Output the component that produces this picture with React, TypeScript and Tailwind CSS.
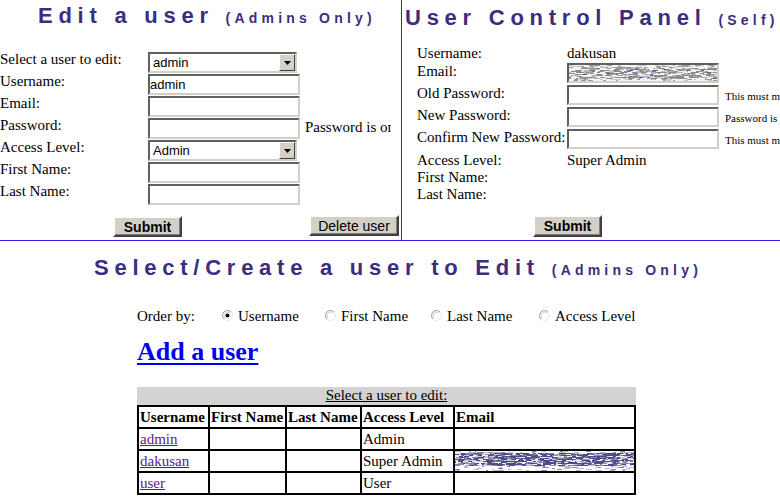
import React from 'react';

const SANS = "font-['Liberation_Sans',Arial,sans-serif]";
const HEAD = "font-['Liberation_Sans',Arial,sans-serif] font-bold text-[#3b2e80] whitespace-nowrap h-[25px]";
const INSET =
  'border-2 border-t-[#5f5f5f] border-l-[#5f5f5f] border-r-[#d4d0c8] border-b-[#d4d0c8] bg-white';
const BTN =
  "bg-[#d4d0c8] border-2 border-t-white border-l-white border-r-[#404040] border-b-[#404040] shadow-[inset_-1px_-1px_0_#808080] font-['Liberation_Sans',Arial,sans-serif] text-[14px] leading-none flex items-center justify-center text-black";

function rng(seed: number) {
  let s = seed;
  return () => {
    s = (s * 1103515245 + 12345) & 0x7fffffff;
    return s / 0x7fffffff;
  };
}

type NoiseProps = {
  w: number;
  h: number;
  seed: number;
  bg: string;
  band: [number, number];
  inner: [string, number][];
  outer: [string, number][];
};

function pick(r: () => number, list: [string, number][]) {
  const v = r();
  let acc = 0;
  for (const [c, p] of list) {
    acc += p;
    if (v < acc) return c;
  }
  return list[list.length - 1][0];
}

function Noise({ w, h, seed, bg, band, inner, outer }: NoiseProps) {
  const r = rng(seed);
  const rects: React.ReactNode[] = [];
  let k = 0;
  for (let y = 0; y < h; y++) {
    let x = 0;
    const inBand = y >= band[0] && y <= band[1];
    while (x < w) {
      const len = 1 + Math.floor(r() * 6);
      const c = pick(r, inBand ? inner : outer);
      rects.push(<rect key={k++} x={x} y={y} width={len} height={1} fill={c} />);
      x += len;
    }
  }
  return (
    <svg width={w} height={h} className="block">
      <rect width={w} height={h} fill={bg} />
      {rects}
    </svg>
  );
}

function Arrow() {
  return (
    <svg width="7" height="4" viewBox="0 0 7 4" className="block">
      <path d="M0 0H7L3.5 4Z" fill="#000" />
    </svg>
  );
}

function FakeSelect({ value }: { value: string }) {
  return (
    <div className={`mt-px h-[21px] w-[149px] flex items-center ${INSET}`}>
      <span className={`flex-1 pl-[3px] ${SANS} text-[13px] leading-[17px]`}>{value}</span>
      <span className="w-[16px] h-[17px] bg-[#d4d0c8] border border-t-white border-l-white border-r-[#404040] border-b-[#404040] flex items-center justify-center">
        <Arrow />
      </span>
    </div>
  );
}

function FakeInput({ value = '' }: { value?: string }) {
  return (
    <div className={`mt-px h-[21px] w-[152px] ${INSET} ${SANS} text-[13px] leading-[17px] px-0`}>
      {value}
    </div>
  );
}

function LRow({ label, children }: { label: string; children: React.ReactNode }) {
  return (
    <div className="flex h-[22px]">
      <div className="w-[148px] shrink-0 whitespace-nowrap">{label}</div>
      {children}
    </div>
  );
}

function LeftPanel() {
  return (
    <div className="w-[401px] shrink-0 overflow-hidden">
      <h1 className={`${HEAD} mt-[3px] pl-[38px] leading-[25px] text-[22px] tracking-[5.75px]`}>
        Edit a user <span className="text-[14px] leading-[14px] tracking-[4.2px]">(Admins Only)</span>
      </h1>
      <div className="mt-[23px]">
        <LRow label="Select a user to edit:">
          <FakeSelect value="admin" />
        </LRow>
        <LRow label="Username:">
          <FakeInput value="admin" />
        </LRow>
        <LRow label="Email:">
          <FakeInput />
        </LRow>
        <LRow label="Password:">
          <FakeInput />
          <span className="ml-[5px] mt-[2px] w-[86px] overflow-hidden whitespace-nowrap block">
            Password is only changed if entered
          </span>
        </LRow>
        <LRow label="Access Level:">
          <FakeSelect value="Admin" />
        </LRow>
        <LRow label="First Name:">
          <FakeInput />
        </LRow>
        <LRow label="Last Name:">
          <FakeInput />
        </LRow>
      </div>
      <div className="flex items-start mt-[10px]">
        <button className={`${BTN} ml-[113px] mt-px h-[21px] w-[69px] font-bold`}>Submit</button>
        <button className={`${BTN} ml-[127px] h-[21px] w-[90px]`}>Delete user</button>
      </div>
    </div>
  );
}

function RInput({ children }: { children?: React.ReactNode }) {
  return (
    <div className={`mt-px h-[20px] w-[152px] shrink-0 overflow-hidden ${INSET}`}>{children}</div>
  );
}

function Note({ text }: { text: string }) {
  return (
    <span className="ml-[6px] mt-[6px] text-[11px] leading-[13px] whitespace-nowrap">{text}</span>
  );
}

function RightPanel() {
  return (
    <div className="w-[500px] shrink-0">
      <h1 className={`${HEAD} mt-[5px] pl-[3px] leading-[25px] text-[22px] tracking-[5.75px]`}>
        User Control Panel <span className="text-[14px] leading-[14px] tracking-[4.2px]">(Self)</span>
      </h1>
      <div className="mt-[15px] pl-[15px]">
        <div className="flex h-[17px]">
          <div className="w-[150px] shrink-0">Username:</div>
          <div>dakusan</div>
        </div>
        <div className="flex h-[22px] items-start">
          <div className="w-[150px] shrink-0 pt-px">Email:</div>
          <RInput>
            <Noise
              w={148}
              h={16}
              seed={7}
              bg="#e4e4e4"
              band={[3, 13]}
              inner={[
                ['#8a8a8a', 0.38],
                ['#b5b5b5', 0.2],
                ['#5a5aa6', 0.04],
                ['#f2f2f2', 0.38],
              ]}
              outer={[
                ['#9a9a9a', 0.25],
                ['#c8c8c8', 0.2],
                ['#f4f4f4', 0.55],
              ]}
            />
          </RInput>
        </div>
        <div className="flex h-[22px] items-start">
          <div className="w-[150px] shrink-0 pt-px">Old Password:</div>
          <RInput />
          <Note text="This must match your current password" />
        </div>
        <div className="flex h-[22px] items-start">
          <div className="w-[150px] shrink-0 pt-px">New Password:</div>
          <RInput />
          <Note text="Password is only changed if entered" />
        </div>
        <div className="flex h-[22px] items-start">
          <div className="w-[150px] shrink-0 pt-px whitespace-nowrap">Confirm New Password:</div>
          <RInput />
          <Note text="This must match the new password" />
        </div>
        <div className="flex h-[19px] pt-[2px]">
          <div className="w-[150px] shrink-0">Access Level:</div>
          <div>Super Admin</div>
        </div>
        <div className="flex h-[17px]">
          <div className="w-[150px] shrink-0">First Name:</div>
        </div>
        <div className="flex h-[17px]">
          <div className="w-[150px] shrink-0">Last Name:</div>
        </div>
      </div>
      <div className="mt-[12px]">
        <button className={`${BTN} ml-[131px] h-[22px] w-[69px] font-bold`}>Submit</button>
      </div>
    </div>
  );
}

function Radio({ checked = false }: { checked?: boolean }) {
  return (
    <svg width="11" height="11" viewBox="0 0 11 11" className="block mt-[2px] shrink-0">
      <circle cx="5.5" cy="5.5" r="5" fill="#fff" />
      <path d="M1.96 9.04A5 5 0 0 1 9.04 1.96" fill="none" stroke="#9a9a9a" strokeWidth="1" />
      <path d="M9.04 1.96A5 5 0 0 1 1.96 9.04" fill="none" stroke="#e6e6e6" strokeWidth="1" />
      <path d="M2.9 8.1A3.7 3.7 0 0 1 8.1 2.9" fill="none" stroke="#cfcfcf" strokeWidth="1" />
      {checked && <circle cx="5.5" cy="5.5" r="2" fill="#000" />}
    </svg>
  );
}

function RadioItem({ label, checked, w }: { label: string; checked?: boolean; w?: string }) {
  return (
    <div className={`flex items-start ${w ?? ''}`}>
      <Radio checked={checked} />
      <span className="ml-[5px] whitespace-nowrap">{label}</span>
    </div>
  );
}

function Bottom() {
  const cell = 'bg-white leading-[20px] pl-px whitespace-nowrap overflow-hidden';
  const head = `${cell} font-bold`;
  const link = 'text-[#551a8b] underline';
  return (
    <div>
      <h1 className={`${HEAD} mt-[14px] pl-[94px] leading-[25px] text-[22px] tracking-[5.75px]`}>
        Select/Create a user to Edit{' '}
        <span className="text-[14px] leading-[14px] tracking-[4.2px]">(Admins Only)</span>
      </h1>
      <div className="flex items-start mt-[28px] pl-[137px] h-[17px]">
        <div className="w-[85px] shrink-0">Order by:</div>
        <RadioItem label="Username" checked w="w-[103px]" />
        <RadioItem label="First Name" w="w-[106px]" />
        <RadioItem label="Last Name" w="w-[108px]" />
        <RadioItem label="Access Level" />
      </div>
      <div className="mt-[12px] pl-[137px] h-[30px] text-[26px] leading-[30px] font-bold">
        <a className="text-[#0000ee] underline underline-offset-[3px] decoration-[2px]">Add a user</a>
      </div>
      <div className="mt-[20px] ml-[137px] w-[499px]">
        <div className="h-[18px] bg-[#d3d3d3] text-center leading-[17px]">
          <span className="underline">Select a user to edit:</span>
        </div>
        <div className="grid grid-cols-[69px_75px_73px_91px_179px] auto-rows-[20px] gap-[2px] p-[2px] bg-black">
          <div className={head}>Username</div>
          <div className={head}>First Name</div>
          <div className={head}>Last Name</div>
          <div className={head}>Access Level</div>
          <div className={head}>Email</div>

          <div className={cell}>
            <span className={link}>admin</span>
          </div>
          <div className={cell}></div>
          <div className={cell}></div>
          <div className={cell}>Admin</div>
          <div className={cell}></div>

          <div className={cell}>
            <span className={link}>dakusan</span>
          </div>
          <div className={cell}></div>
          <div className={cell}></div>
          <div className={cell}>Super Admin</div>
          <div className="bg-white overflow-hidden">
            <Noise
              w={179}
              h={20}
              seed={31}
              bg="#ffffff"
              band={[2, 14]}
              inner={[
                ['#4e4a8e', 0.42],
                ['#8c8aa8', 0.25],
                ['#c8c8d8', 0.13],
                ['#f4f4f8', 0.2],
              ]}
              outer={[
                ['#ffffff', 0.7],
                ['#b8b8c8', 0.2],
                ['#8a8aa0', 0.1],
              ]}
            />
          </div>

          <div className={cell}>
            <span className={link}>user</span>
          </div>
          <div className={cell}></div>
          <div className={cell}></div>
          <div className={cell}>User</div>
          <div className={cell}></div>
        </div>
      </div>
    </div>
  );
}

export default function App() {
  return (
    <div className="w-[780px] h-[500px] overflow-hidden bg-white text-black font-['Liberation_Serif','Times_New_Roman',serif] text-[15px] leading-[17px]">
      <div className="flex h-[240px]">
        <LeftPanel />
        <div className="w-px shrink-0 bg-[#3a14f5]" />
        <RightPanel />
      </div>
      <div className="h-px w-full bg-[#3a14f5]" />
      <Bottom />
    </div>
  );
}
